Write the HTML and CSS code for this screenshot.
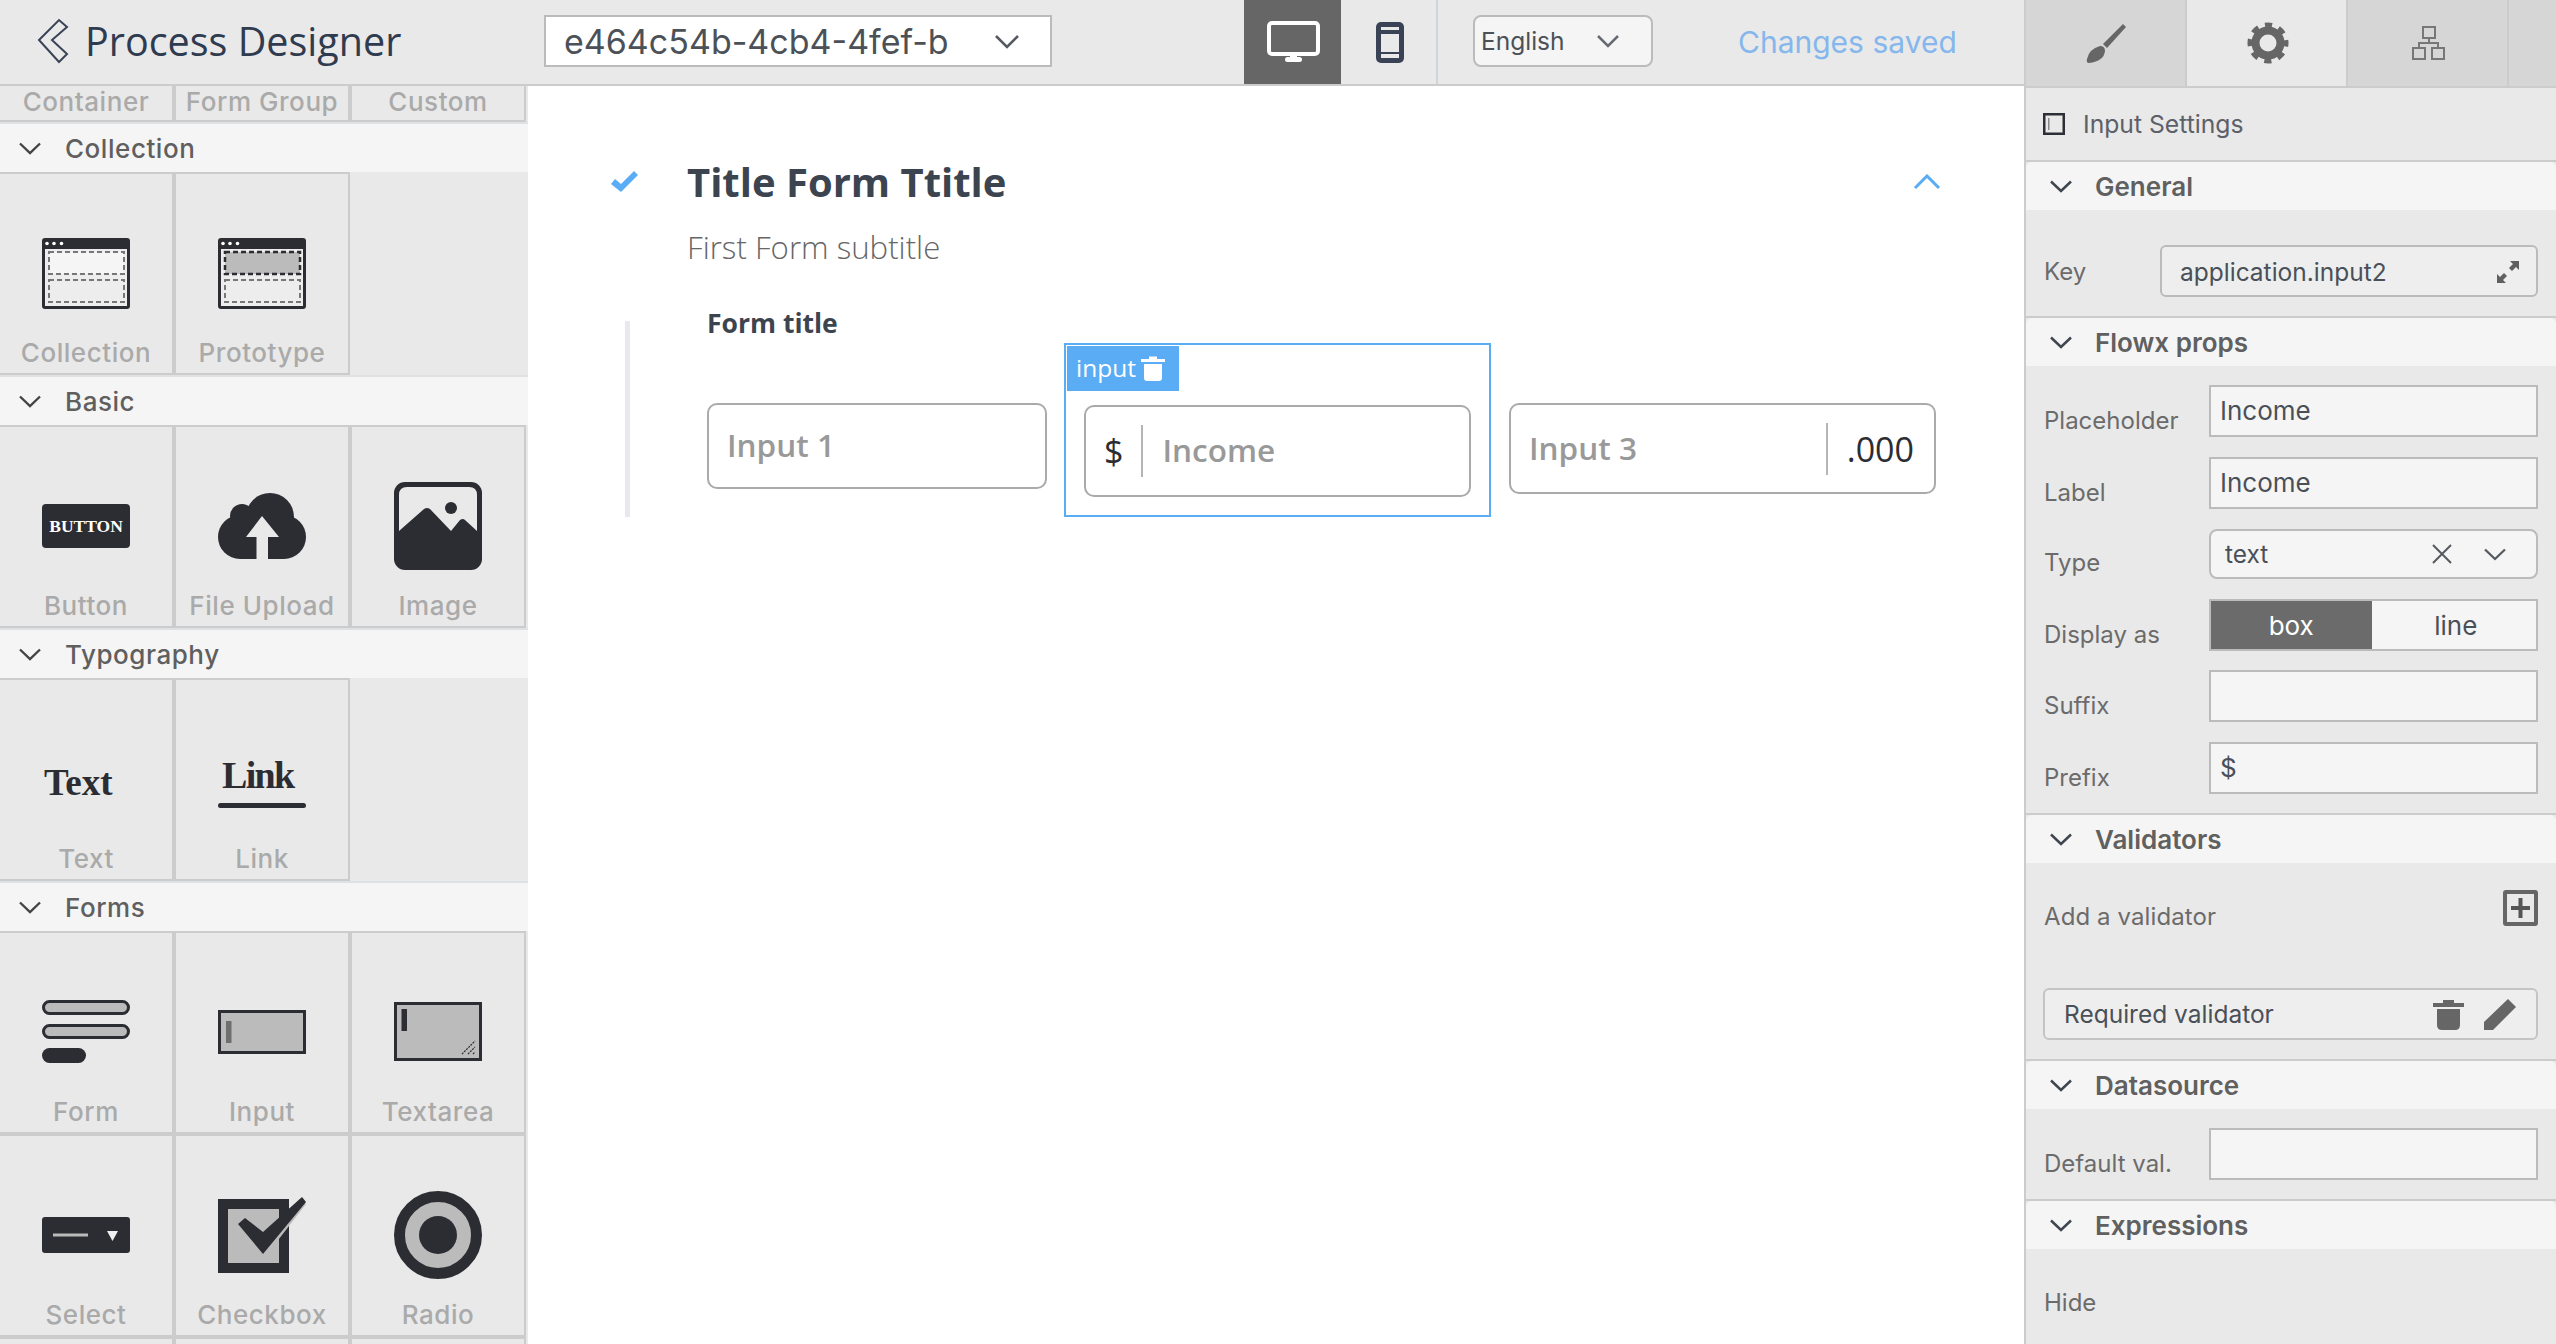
FILE: index.html
```html
<!DOCTYPE html>
<html lang="en">
<head>
  <meta charset="UTF-8" />
  <title>Process Designer</title>
  <link rel="stylesheet" href="styles.css">
</head>
<body>
<div class="app">
  <div class="main">
    <header class="topbar">
      <svg class="back" width="32" height="46" viewBox="0 0 32 46"><path d="M2 22 L22 2 L30 9 L15 22 L30 36 L22 44 Z" fill="none" stroke="#3a4356" stroke-width="2"/></svg>
      <div class="app-title">Process Designer</div>
      <div class="id-select">
        <span>e464c54b-4cb4-4fef-b</span>
        <svg class="chev" width="26" height="15" viewBox="0 0 26 15"><path d="M2 2 L13 13 L24 2" fill="none" stroke="#555a60" stroke-width="2.5"/></svg>
      </div>
      <div class="mode mode-on">
        <svg width="55" height="42" viewBox="0 0 55 42"><rect x="3" y="2" width="49" height="31" rx="3" fill="none" stroke="#fff" stroke-width="4"/><rect x="24" y="34" width="7" height="4" fill="#fff"/><rect x="19" y="36" width="17" height="5" rx="2.5" fill="#fff"/></svg>
      </div>
      <div class="mode">
        <svg width="28" height="41" viewBox="0 0 28 41"><rect x="0" y="0" width="28" height="41" rx="5" fill="#3a4356"/><rect x="5" y="5" width="18" height="3" fill="#e9e9e9"/><rect x="5" y="12" width="18" height="18" fill="#e9e9e9"/><rect x="5" y="32" width="18" height="4" fill="#e9e9e9"/></svg>
      </div>
      <div class="lang-select">
        <span>English</span>
        <svg width="24" height="14" viewBox="0 0 24 14"><path d="M2 2 L12 12 L22 2" fill="none" stroke="#666b72" stroke-width="2.5"/></svg>
      </div>
      <div class="saved">Changes saved</div>
    </header>

    <div class="workspace">
      <aside class="sidebar">
        <div class="cells cells-cut">
          <div class="cell"><span class="cell-label">Container</span></div>
          <div class="cell"><span class="cell-label">Form Group</span></div>
          <div class="cell"><span class="cell-label">Custom</span></div>
        </div>

        <div class="side-head">
          <svg width="24" height="13" viewBox="0 0 24 13"><path d="M2 1.5 L12 11 L22 1.5" fill="none" stroke="#444" stroke-width="2.4"/></svg>
          <span>Collection</span>
        </div>
        <div class="cells">
          <div class="cell">
            <svg class="ico" viewBox="0 0 88 88"><rect y="9" width="88" height="71" rx="3" fill="#2c2d33"/><rect x="3" y="20" width="82" height="57" fill="#ededed"/><circle cx="5" cy="14.5" r="1.8" fill="#fff"/><circle cx="12" cy="14.5" r="1.8" fill="#fff"/><circle cx="19.5" cy="14.5" r="1.8" fill="#fff"/><rect x="7" y="23" width="75" height="22" fill="#f5f5f5" stroke="#777" stroke-width="2" stroke-dasharray="5 3"/><rect x="7" y="51" width="75" height="22" fill="none" stroke="#777" stroke-width="2" stroke-dasharray="5 3"/></svg>
            <span class="cell-label">Collection</span>
          </div>
          <div class="cell">
            <svg class="ico" viewBox="0 0 88 88"><rect y="9" width="88" height="71" rx="3" fill="#2c2d33"/><rect x="3" y="20" width="82" height="57" fill="#ededed"/><circle cx="5" cy="14.5" r="1.8" fill="#fff"/><circle cx="12" cy="14.5" r="1.8" fill="#fff"/><circle cx="19.5" cy="14.5" r="1.8" fill="#fff"/><rect x="7" y="23" width="75" height="22" fill="#bbb" stroke="#2c2d33" stroke-width="2.5" stroke-dasharray="5 3"/><rect x="7" y="51" width="75" height="22" fill="none" stroke="#777" stroke-width="2" stroke-dasharray="5 3"/></svg>
            <span class="cell-label">Prototype</span>
          </div>
        </div>

        <div class="side-head">
          <svg width="24" height="13" viewBox="0 0 24 13"><path d="M2 1.5 L12 11 L22 1.5" fill="none" stroke="#444" stroke-width="2.4"/></svg>
          <span>Basic</span>
        </div>
        <div class="cells">
          <div class="cell">
            <svg class="ico" viewBox="0 0 88 88"><rect y="22" width="88" height="44" rx="4" fill="#2c2d33"/><text class="ico-btn" x="44" y="50" text-anchor="middle">BUTTON</text></svg>
            <span class="cell-label">Button</span>
          </div>
          <div class="cell">
            <svg class="ico" viewBox="0 0 88 88"><g fill="#2c2d33"><circle cx="52" cy="35" r="24"/><circle cx="24" cy="34" r="12"/><circle cx="22" cy="55" r="22"/><circle cx="66" cy="55" r="22"/><rect x="22" y="40" width="44" height="37"/></g><path d="M44 34 L61 55 H50 V77 H38.5 V55 H28 Z" fill="#e9e9e9"/></svg>
            <span class="cell-label">File Upload</span>
          </div>
          <div class="cell">
            <svg class="ico" viewBox="0 0 88 88"><rect width="88" height="88" rx="11" fill="#2c2d33"/><path d="M5 49 V13 Q5 5 13 5 H75 Q83 5 83 13 V49 L71 38 Q69 36 66 38 L57 49 L36 27 Q33 25 30 27 Z" fill="#e9e9e9"/><circle cx="57" cy="26" r="6" fill="#2c2d33"/></svg>
            <span class="cell-label">Image</span>
          </div>
        </div>

        <div class="side-head">
          <svg width="24" height="13" viewBox="0 0 24 13"><path d="M2 1.5 L12 11 L22 1.5" fill="none" stroke="#444" stroke-width="2.4"/></svg>
          <span>Typography</span>
        </div>
        <div class="cells">
          <div class="cell">
            <svg class="ico" viewBox="0 0 88 88"><text class="ico-type ico-text" x="2" y="60">Text</text></svg>
            <span class="cell-label">Text</span>
          </div>
          <div class="cell">
            <svg class="ico" viewBox="0 0 88 88"><text class="ico-type ico-link" x="4" y="53">Link</text><rect y="68" width="88" height="5" rx="2.5" fill="#2c2d33"/></svg>
            <span class="cell-label">Link</span>
          </div>
        </div>

        <div class="side-head">
          <svg width="24" height="13" viewBox="0 0 24 13"><path d="M2 1.5 L12 11 L22 1.5" fill="none" stroke="#444" stroke-width="2.4"/></svg>
          <span>Forms</span>
        </div>
        <div class="cells">
          <div class="cell">
            <svg class="ico" viewBox="0 0 88 88"><rect x="1.5" y="13.5" width="85" height="12" rx="6" fill="#bbb" stroke="#2c2d33" stroke-width="3"/><rect x="1.5" y="37.5" width="85" height="12" rx="6" fill="#bbb" stroke="#2c2d33" stroke-width="3"/><rect y="60" width="44" height="15" rx="7.5" fill="#2c2d33"/></svg>
            <span class="cell-label">Form</span>
          </div>
          <div class="cell">
            <svg class="ico" viewBox="0 0 88 88"><rect x="1.5" y="23.5" width="85" height="41" fill="#bbb" stroke="#2c2d33" stroke-width="3"/><rect x="8" y="33" width="5.5" height="22" fill="#6e6e6e"/></svg>
            <span class="cell-label">Input</span>
          </div>
          <div class="cell">
            <svg class="ico" viewBox="0 0 88 88"><rect x="1.5" y="15.5" width="85" height="56" fill="#bbb" stroke="#2c2d33" stroke-width="3"/><rect x="7.5" y="21" width="5.5" height="22" fill="#2c2d33"/><path d="M68 66 L81 53 M74 66 L81 59 M79 66 L81 64" stroke="#2c2d33" stroke-width="1.2" stroke-dasharray="2 1"/></svg>
            <span class="cell-label">Textarea</span>
          </div>
          <div class="cell">
            <svg class="ico" viewBox="0 0 88 88"><rect y="26" width="88" height="36" rx="3" fill="#2c2d33"/><rect x="11" y="42.5" width="35" height="3" fill="#bbb"/><path d="M65 40 H76 L70.5 50 Z" fill="#f0f0f0"/></svg>
            <span class="cell-label">Select</span>
          </div>
          <div class="cell">
            <svg class="ico" viewBox="0 0 88 88"><rect x="5" y="13" width="61" height="64" fill="#bbb" stroke="#2c2d33" stroke-width="10"/><path d="M47 66 L88 13 L82 8 L50 40 Z" fill="#bbb"/><path d="M20 33 L27 27 L45 41 L84 6 L88 11 L45 63 Z" fill="#2c2d33"/></svg>
            <span class="cell-label">Checkbox</span>
          </div>
          <div class="cell">
            <svg class="ico" viewBox="0 0 88 88"><circle cx="44" cy="44" r="38.5" fill="#bbb" stroke="#2c2d33" stroke-width="11"/><circle cx="44" cy="44" r="19" fill="#2c2d33"/></svg>
            <span class="cell-label">Radio</span>
          </div>
          <div class="cell"></div>
          <div class="cell"></div>
          <div class="cell"></div>
        </div>
      </aside>

      <main class="canvas">
        <div class="form-head">
          <svg class="form-check" width="28" height="22" viewBox="0 0 28 22"><path d="M0 13 L4 8 L10 13 L23 0 L27 4 L10 21 Z" fill="#5aacf5"/></svg>
          <h2 class="form-title">Title Form Ttitle</h2>
          <svg width="28" height="16" viewBox="0 0 28 16"><path d="M2 14 L14 2 L26 14" fill="none" stroke="#5aacf5" stroke-width="3"/></svg>
        </div>
        <div class="form-sub">First Form subtitle</div>

        <section class="group">
          <div class="group-title">Form title</div>
          <div class="group-row">
            <div class="inp inp-one"><span class="ph">Input 1</span></div>
            <div class="selected">
              <div class="tag">
                <span>input</span>
                <svg width="24" height="26" viewBox="0 0 24 26"><path d="M8 4 V1.5 H16 V4 H24 V7 H0 V4 Z M3 9 H21 V23 Q21 26 18 26 H6 Q3 26 3 23 Z" fill="#fff"/></svg>
              </div>
              <div class="inp inp-two">
                <span class="addon">$</span>
                <i class="sep"></i>
                <span class="ph">Income</span>
              </div>
            </div>
            <div class="inp inp-three">
              <span class="ph">Input 3</span>
              <i class="sep sep-end"></i>
              <span class="addon">.000</span>
            </div>
          </div>
        </section>
      </main>
    </div>
  </div>

  <aside class="panel">
    <nav class="tabs">
      <div class="tab">
        <svg width="42" height="42" viewBox="0 0 42 42"><path d="M40 5 L37 2 L17 22 L21 26 Z" fill="#666"/><path d="M14 24 Q19 24 19 29 Q18 39 3 41 Q0 41 1 37 Q3 27 14 24 Z" fill="#666"/></svg>
      </div>
      <div class="tab tab-on">
        <svg width="42" height="42" viewBox="0 0 42 42"><circle cx="21" cy="21" r="12.5" fill="none" stroke="#666" stroke-width="8"/><circle cx="21" cy="21" r="17.5" fill="none" stroke="#666" stroke-width="6" stroke-dasharray="7 6.74" stroke-dashoffset="3.5"/></svg>
      </div>
      <div class="tab">
        <svg width="34" height="34" viewBox="0 0 34 34"><g fill="none" stroke="#777" stroke-width="2"><rect x="11" y="1" width="12" height="11"/><rect x="1" y="22" width="12" height="11"/><rect x="20" y="22" width="12" height="11"/><path d="M17 12 V17 M7 22 V17 H26 V22"/></g></svg>
      </div>
      <div class="tab tab-rest"></div>
    </nav>

    <div class="settings-title">
      <svg width="22" height="22" viewBox="0 0 22 22"><rect x="1.25" y="1.25" width="19.5" height="19.5" fill="none" stroke="#2d2f36" stroke-width="2.5"/><rect x="5" y="5" width="1.5" height="12" fill="#888"/></svg>
      <span>Input Settings</span>
    </div>

    <section class="sect">
      <div class="sect-head">
        <svg width="24" height="13" viewBox="0 0 24 13"><path d="M2 1.5 L12 11 L22 1.5" fill="none" stroke="#3f4650" stroke-width="2.5"/></svg>
        <span>General</span>
      </div>
      <div class="sect-body body-key">
        <div class="row row-mid">
          <label class="row-label">Key</label>
          <div class="field field-key">
            <span>application.input2</span>
            <svg width="22" height="22" viewBox="0 0 22 22"><path d="M13 0 H22 V9 L19 6 L15 10 L12 7 L16 3 Z M9 22 H0 V13 L3 16 L7 12 L10 15 L6 19 Z" fill="#5f5f5f"/></svg>
          </div>
        </div>
      </div>
    </section>

    <section class="sect">
      <div class="sect-head">
        <svg width="24" height="13" viewBox="0 0 24 13"><path d="M2 1.5 L12 11 L22 1.5" fill="none" stroke="#3f4650" stroke-width="2.5"/></svg>
        <span>Flowx props</span>
      </div>
      <div class="sect-body">
        <div class="row"><label class="row-label">Placeholder</label><div class="field">Income</div></div>
        <div class="row"><label class="row-label">Label</label><div class="field">Income</div></div>
        <div class="row">
          <label class="row-label">Type</label>
          <div class="field field-type">
            <span class="type-val">text</span>
            <svg width="20" height="20" viewBox="0 0 20 20"><path d="M1 1 L19 19 M19 1 L1 19" stroke="#555a60" stroke-width="2"/></svg>
            <svg width="24" height="13" viewBox="0 0 24 13"><path d="M2 1.5 L12 11 L22 1.5" fill="none" stroke="#555a60" stroke-width="2.3"/></svg>
          </div>
        </div>
        <div class="row row-toggle">
          <label class="row-label">Display as</label>
          <div class="toggle"><span class="toggle-on">box</span><span>line</span></div>
        </div>
        <div class="row"><label class="row-label">Suffix</label><div class="field"></div></div>
        <div class="row"><label class="row-label">Prefix</label><div class="field">$</div></div>
      </div>
    </section>

    <section class="sect">
      <div class="sect-head">
        <svg width="24" height="13" viewBox="0 0 24 13"><path d="M2 1.5 L12 11 L22 1.5" fill="none" stroke="#3f4650" stroke-width="2.5"/></svg>
        <span>Validators</span>
      </div>
      <div class="sect-body body-valid">
        <div class="add-row">
          <span class="row-label">Add a validator</span>
          <svg width="35" height="36" viewBox="0 0 35 36"><rect x="2" y="2" width="31" height="32" rx="1" fill="none" stroke="#666" stroke-width="4"/><path d="M17.5 8 V28 M8 18 H27" stroke="#555" stroke-width="4"/></svg>
        </div>
        <div class="valid-box">
          <span>Required validator</span>
          <svg width="31" height="31" viewBox="0 0 31 31"><path d="M10 4 V1 H21 V4 H31 V8 H0 V4 Z M4 10 H27 V26 Q27 31 22 31 H9 Q4 31 4 26 Z" fill="#666"/></svg>
          <svg width="32" height="31" viewBox="0 0 32 31"><path d="M24 0 L32 8 L9 31 H0 V23 Z" fill="#666"/></svg>
        </div>
      </div>
    </section>

    <section class="sect">
      <div class="sect-head">
        <svg width="24" height="13" viewBox="0 0 24 13"><path d="M2 1.5 L12 11 L22 1.5" fill="none" stroke="#3f4650" stroke-width="2.5"/></svg>
        <span>Datasource</span>
      </div>
      <div class="sect-body">
        <div class="row"><label class="row-label">Default val.</label><div class="field"></div></div>
      </div>
    </section>

    <section class="sect">
      <div class="sect-head">
        <svg width="24" height="13" viewBox="0 0 24 13"><path d="M2 1.5 L12 11 L22 1.5" fill="none" stroke="#3f4650" stroke-width="2.5"/></svg>
        <span>Expressions</span>
      </div>
      <div class="sect-body body-hide"><span class="row-label">Hide</span></div>
    </section>
  </aside>
</div>
</body>
</html>
```

FILE: styles.css
```css
* { box-sizing: border-box; }
html, body { margin: 0; height: 100%; overflow: hidden; }
body { font-family: Inter, "Liberation Sans", sans-serif; background: #e9e9e9; color: #4a5058; }
svg { display: block; flex: none; }

.app { display: flex; height: 1344px; }
.main { width: 2024px; display: flex; flex-direction: column; }

/* top bar */
.topbar {
  height: 86px; display: flex; align-items: flex-start;
  background: #e9e9e9; border-bottom: 2px solid #ccc;
}
.back { margin: 18px 0 0 37px; }
.app-title {
  font-family: "Open Sans", sans-serif; font-size: 39.5px; line-height: 82px;
  color: #2f3b4f; width: 459px; margin-left: 16px; white-space: nowrap;
}
.id-select {
  width: 508px; height: 52px; margin-top: 15px; padding: 0 30px 0 18px;
  display: flex; align-items: center; justify-content: space-between;
  background: #fff; border: 2px solid #bbb;
  font-size: 34px; color: #4c5158; white-space: nowrap;
}
.mode {
  width: 97px; height: 84px; padding-left: 2px; display: flex; align-items: center; justify-content: center;
  border-right: 2px solid #cfd5db;
}
.mode-on { margin-left: 192px; background: #666; border-right: 0; }
.lang-select {
  width: 180px; height: 52px; margin: 15px 0 0 35px; padding: 0 31px 0 6px;
  display: flex; align-items: center; justify-content: space-between;
  background: #f5f5f5; border: 2px solid #bbb; border-radius: 8px;
  font-size: 24.5px; color: #4c5158;
}
.saved { margin-left: 85px; font-size: 30px; line-height: 84px; color: #85b7ec; white-space: nowrap; }

.workspace { flex: 1; display: flex; min-height: 0; }

/* left palette */
.sidebar { width: 528px; height: 1258px; overflow: hidden; background: #e9e9e9; }
.cells { display: grid; grid-template-columns: repeat(3, 176px); margin-left: -2px; }
.cell {
  height: 203px; border: 2px solid #ccc; display: flex; flex-direction: column; align-items: center;
}
.cells-cut .cell { height: 36px; border-top: 0; }
.ico { width: 88px; height: 88px; margin: 55px 0 20px; }
.cell-label { font-size: 26px; line-height: 32px; font-weight: 500; letter-spacing: .55px; color: #aaa; white-space: nowrap; }
.ico-btn { font-family: "Liberation Serif", serif; font-weight: 700; font-size: 17.5px; fill: #fff; }
.ico-type { font-family: "Liberation Serif", serif; font-weight: 700; font-size: 38px; fill: #2c2d33; }
.ico-text { font-size: 37px; }
.ico-link { letter-spacing: -1.7px; }

.side-head {
  height: 50px; padding-left: 18px; display: flex; align-items: center; gap: 23px;
  background: #f5f5f5; border-top: 2px solid #dfe2e5;
  font-size: 26px; font-weight: 500; letter-spacing: .55px; color: #5f5f5f;
}

/* canvas */
.canvas { flex: 1; background: #fff; padding: 69px 0 0 83px; }
.form-head { display: flex; align-items: center; width: 1330px; height: 54px; }
.form-check { margin-right: 48px; }
.form-title {
  flex: 1; margin: 0; font-family: "Open Sans", sans-serif; font-size: 40px; font-weight: 700;
  line-height: 54px; color: #3c4450;
}
.form-sub {
  margin: 16px 0 0 76px; font-family: "Open Sans", sans-serif; font-size: 31.2px; font-weight: 300;
  line-height: 44px; color: #666;
}
.group {
  display: flow-root;
  width: 1325px; height: 196px; margin: 52px 0 0 14px; padding-left: 77px;
  border-left: 5px solid #e8e8ee;
}
.group-title {
  margin-top: -17px; font-family: "Open Sans", sans-serif; font-size: 26.5px; font-weight: 700;
  line-height: 38px; color: #3c4450;
}
.group-row { display: flex; align-items: flex-start; padding-top: 1px; }
.inp {
  display: flex; align-items: center; background: #fff;
  border: 2px solid #aaa; border-radius: 10px;
  font-family: "Open Sans", sans-serif;
}
.ph { font-size: 31.5px; font-weight: 600; color: #999; margin-top: -3px; }
.addon { font-size: 34px; color: #2c2d33; }
.sep { display: block; width: 2px; height: 52px; background: #b5b5b5; }
.inp-one { width: 340px; height: 86px; margin-top: 60px; padding-left: 18px; }
.selected {
  width: 427px; height: 174px; margin-left: 17px; padding: 1px;
  border: 2px solid #5aacf5;
}
.tag {
  width: 112px; height: 45px; padding: 0 0 2px 9px; display: flex; align-items: center; gap: 5px;
  background: #5aacf5; font-family: "Open Sans", sans-serif; font-size: 24.5px; color: #fff;
}
.inp-two { width: 387px; height: 92px; margin: 14px 0 0 17px; padding-left: 18px; }
.inp-two .sep { margin: 0 19px 0 18px; }
.inp-three { width: 427px; height: 91px; margin: 60px 0 0 18px; padding: 0 20px 0 18px; }
.inp-three .ph { flex: 1; }
.inp-three .sep { margin-right: 19px; }

/* right panel */
.panel { width: 532px; border-left: 2px solid #ccc; background: #e9e9e9; overflow: hidden; }
.tabs { display: flex; height: 88px; }
.tab {
  flex: 0 0 161px; padding-left: 2px; display: flex; align-items: center; justify-content: center;
  background: #d6d6d6; border-right: 2px solid #ccc; border-bottom: 2px solid #ccc;
}
.tab-on { background: #e9e9e9; }
.tab-rest { flex: 1; border-right: 0; }
.settings-title {
  height: 72px; padding-left: 17px; display: flex; align-items: center; gap: 18px;
  font-size: 24.7px; color: #5c6068;
}
.sect { border-top: 2px solid #ccc; }
.sect-head {
  height: 48px; padding-left: 23px; display: flex; align-items: center; gap: 22px;
  background: #f5f5f5; border-radius: 6px 6px 0 0;
  font-size: 26px; font-weight: 600; color: #606060;
}
.sect-body { padding: 19px 18px; display: flex; flex-direction: column; gap: 20px; }
.body-key { padding-top: 35px; }
.row { display: flex; align-items: flex-end; }
.row-toggle { margin-bottom: -1px; }
.row-mid { align-items: center; }
.row-mid .row-label { padding-top: 3px; }
.row-label { flex: 1; padding-bottom: 1px; font-size: 24px; line-height: 30px; color: #6b6b6b; white-space: nowrap; }
.field {
  width: 329px; height: 52px; padding: 0 9px 2px; display: flex; align-items: center;
  background: #f5f5f5; border: 2px solid #bbb;
  font-size: 26px; color: #4a5058;
}
.field-key {
  width: 378px; padding: 2px 17px 0 18px; justify-content: space-between;
  background: #eee; border-radius: 6px; font-size: 24.5px;
}
.field-type { height: 50px; padding: 0 29px 0 14px; border-radius: 8px; gap: 31px; font-size: 24.5px; }
.type-val { flex: 1; }
.toggle {
  width: 329px; height: 52px; display: flex; gap: 4px;
  background: #f5f5f5; border: 2px solid #bbb; font-size: 26px; color: #4a5058;
}
.toggle span { flex: 1; display: flex; align-items: center; justify-content: center; }
.toggle .toggle-on { background: #6b6b6b; color: #fff; }
.body-valid { padding-top: 27px; gap: 56px; }
.add-row { height: 42px; display: flex; justify-content: space-between; align-items: flex-start; }
.add-row .row-label { margin-top: 12px; letter-spacing: .1px; }
.valid-box {
  height: 52px; margin-left: -1px; padding: 0 20px 0 19px; display: flex; align-items: center; gap: 20px;
  background: #eee; border: 2px solid #c4c4c4; border-radius: 6px;
  font-size: 24.5px; color: #4a5058;
}
.valid-box span { flex: 1; }
.body-hide { padding-top: 39px; }
```
